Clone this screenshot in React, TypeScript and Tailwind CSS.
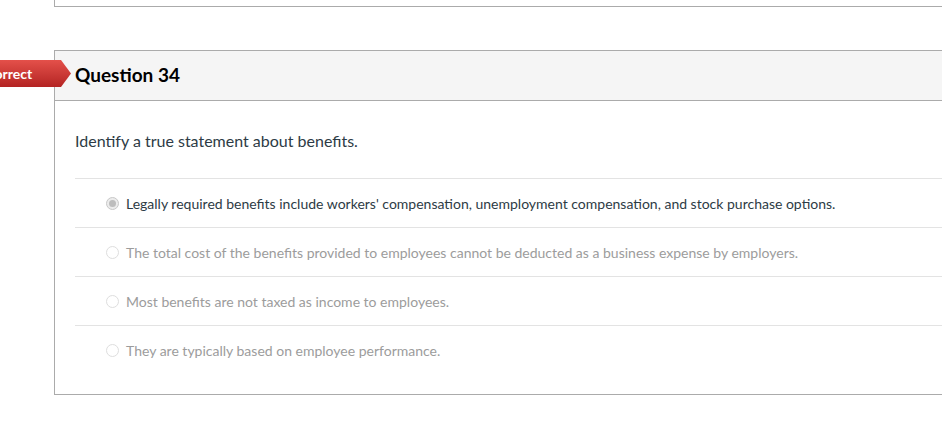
const answers = [
    { text: "Legally required benefits include workers' compensation, unemployment compensation, and stock purchase options.", selected: true },
    { text: 'The total cost of the benefits provided to employees cannot be deducted as a business expense by employers.', selected: false },
    { text: 'Most benefits are not taxed as income to employees.', selected: false },
    { text: 'They are typically based on employee performance.', selected: false },
]

function Radio({ checked }: { checked: boolean }) {
    if (checked) {
        return (
            <div className="w-[13px] h-[13px] rounded-full border border-[#c8c8c8] bg-[#ececec] flex items-center justify-center shrink-0">
                <div className="w-[7px] h-[7px] rounded-full bg-[#bdbdbd]"></div>
            </div>
        )
    }
    return <div className="w-[13px] h-[13px] rounded-full border border-[#dedede] bg-white shrink-0"></div>
}

export default function App() {
    return (
        <div className="relative w-[942px] h-[440px] overflow-hidden bg-white font-['Lato','Open_Sans',sans-serif] text-[#2d3b45]">
            <div className="ml-[54px] h-[7px] border-l border-b border-[#ababab]"></div>

            <div className="relative mt-[43px] ml-[54px] border-l border-t border-b border-[#ababab]">
                <div className="absolute top-[9px] left-[-95px] w-[111px] h-[27px] bg-gradient-to-b from-[#e4504a] to-[#b42323] [clip-path:polygon(0_0,calc(100%-10px)_0,100%_50%,calc(100%-10px)_100%,0_100%)] flex items-center pl-[16px]">
                    <span className="text-white text-[14px] font-bold">Incorrect</span>
                </div>

                <div className="h-[50px] bg-[#f5f5f5] border-b border-[#ababab] flex items-center px-[20px]">
                    <h2 className="text-[19px] font-bold text-black">Question 34</h2>
                </div>

                <div className="pl-[20px] pt-[28px] pb-[20px]">
                    <p className="text-[16px] leading-[24px]">Identify a true statement about benefits.</p>
                    <div className="mt-[25px]">
                        {answers.map((a, i) => (
                            <div key={i} className="h-[49px] border-t border-[#e3e3e3] flex items-center pl-[31px] gap-[7px]">
                                <Radio checked={a.selected} />
                                <span className={`text-[14px] ${a.selected ? 'text-[#2d3b45]' : 'text-[#9c9c9c]'}`}>{a.text}</span>
                            </div>
                        ))}
                    </div>
                </div>
            </div>
        </div>
    )
}
